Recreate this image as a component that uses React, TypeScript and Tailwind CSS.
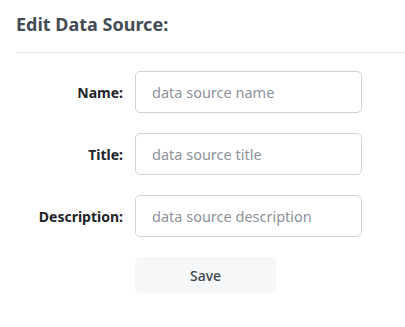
import React from "react";

const font = { fontFamily: '"Noto Sans", "Open Sans", Arial, sans-serif' };

function Row({ label, placeholder }: { label: string; placeholder: string }) {
  return (
    <div className="flex items-center">
      <label className="w-[107px] shrink-0 text-right text-[14px] font-bold text-[#212529]">{label}</label>
      <input
        className="ml-3 h-[42px] w-[227px] rounded-[5px] border border-[#ced4da] bg-white px-4 text-[14.5px] text-[#212529] outline-none placeholder:text-[#8c939a]"
        placeholder={placeholder}
      />
    </div>
  );
}

export default function App() {
  return (
    <div className="min-h-[327px] bg-white pl-4" style={font}>
      <div className="border-b border-[#e6e8ea] pb-[16px] pt-[12px]">
        <h2 className="text-[18px] font-bold leading-[24px] text-[#444c55]">Edit Data Source:</h2>
      </div>
      <div className="flex flex-col gap-5 pt-[18px]">
        <Row label="Name:" placeholder="data source name" />
        <Row label="Title:" placeholder="data source title" />
        <Row label="Description:" placeholder="data source description" />
        <div className="pl-[119px]">
          <button className="h-[36px] w-[141px] rounded-[5px] bg-[#f6f7f9] text-[14px] font-medium text-[#3f454b]">Save</button>
        </div>
      </div>
    </div>
  );
}
